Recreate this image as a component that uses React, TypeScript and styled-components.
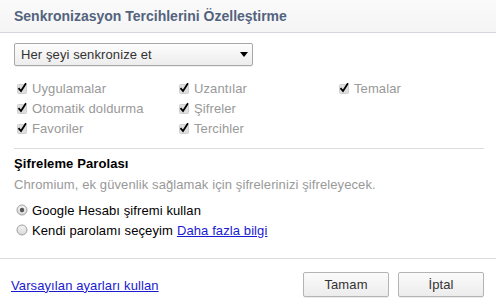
import React from "react";
import styled, { createGlobalStyle } from "styled-components";

const Global = createGlobalStyle`
  html, body { margin: 0; padding: 0; background: #fff; }
  body { font-family: "Liberation Sans", Arial, sans-serif; font-size: 13px; color: #222; letter-spacing: 0.1px; }
  * { box-sizing: border-box; }
`;

const Page = styled.div`
  width: 496px;
  height: 307px;
  display: flex;
  flex-direction: column;
  background: #fff;
  overflow: hidden;
`;

const Header = styled.div`
  height: 33px;
  flex: none;
  display: flex;
  align-items: center;
  padding: 0 14px 1px 14px;
  background: linear-gradient(#fafafa, #f5f5f5);
  border-bottom: 1px solid #d4d6e0;
`;

const Title = styled.h1`
  margin: 0;
  font-size: 14px;
  letter-spacing: 0;
  font-weight: bold;
  color: #53637d;
`;

const Content = styled.div`
  flex: 1;
  padding: 10px 12px 0 14px;
  display: flex;
  flex-direction: column;
`;

const SelectWrap = styled.div`
  position: relative;
  width: 239px;
  height: 23px;
`;

const Select = styled.select`
  appearance: none;
  -webkit-appearance: none;
  width: 100%;
  height: 100%;
  border: 1px solid #a8a8a8;
  border-radius: 2px;
  background: linear-gradient(#fdfdfd, #ededed);
  font-family: "Liberation Sans", Arial, sans-serif;
  font-size: 13px;
  letter-spacing: 0.1px;
  color: #333;
  padding: 0 20px 0 6px;
  box-shadow: 0 1px 0 rgba(0,0,0,0.06);
  outline: none;
`;

const Arrow = styled.svg`
  position: absolute;
  right: 5px;
  top: 9px;
  pointer-events: none;
`;

const Grid = styled.div`
  display: grid;
  grid-template-columns: 162px 160px 140px;
  grid-auto-rows: 20px;
  margin-top: 12px;
  padding-left: 2px;
`;

const CheckItem = styled.label<{ $col: number; $row: number }>`
  grid-column: ${(p) => p.$col};
  grid-row: ${(p) => p.$row};
  display: flex;
  align-items: center;
  gap: 4px;
  color: #999;
  font-size: 13px;
`;

const Separator = styled.div<{ $full?: boolean }>`
  height: 1px;
  background: #dcdcdc;
  margin: ${(p) => (p.$full ? "0" : "10px 0 0 0")};
`;

const SectionTitle = styled.h2`
  margin: 7px 0 0 0;
  font-size: 13px;
  font-weight: bold;
  color: #000;
  line-height: 16px;
`;

const Description = styled.p`
  margin: 5px 0 0 0;
  color: #999;
  line-height: 16px;
`;

const RadioRow = styled.label<{ $first?: boolean }>`
  display: flex;
  align-items: center;
  gap: 4px;
  height: 20px;
  margin-top: ${(p) => (p.$first ? "7px" : "0")};
  padding-left: 2px;
  color: #000;
`;

const Link = styled.a`
  color: #1a1ad0;
  text-decoration: underline;
  cursor: pointer;
`;

const Footer = styled.div`
  height: 48px;
  flex: none;
  display: flex;
  align-items: center;
  justify-content: space-between;
  padding: 2px 12px 0 11px;
`;

const FooterLink = styled(Link)`
  margin-top: 2px;
`;

const Buttons = styled.div`
  display: flex;
  gap: 9px;
`;

const Button = styled.button`
  width: 86px;
  height: 25px;
  border: 1px solid #b4b4b4;
  border-radius: 2px;
  background: linear-gradient(#fbfbfb, #ececec);
  box-shadow: 0 1px 0 rgba(0,0,0,0.08);
  font-family: "Liberation Sans", Arial, sans-serif;
  font-size: 13px;
  letter-spacing: 0.1px;
  color: #333;
  padding: 0;
`;

const CheckIcon = () => (
  <svg width="12" height="12" viewBox="0 0 12 12">
    <rect x="1.5" y="2.5" width="9" height="9" rx="1" fill="#dedede" stroke="#d0d0d0" />
    <path d="M2.5 6.2 L5 9 L10 1.2" fill="none" stroke="#000" strokeWidth="1.8" />
  </svg>
);

const RadioIcon = ({ checked }: { checked?: boolean }) => (
  <svg width="12" height="12" viewBox="0 0 12 12">
    <defs>
      <linearGradient id={checked ? "rg1" : "rg2"} x1="0" y1="0" x2="0" y2="1">
        <stop offset="0" stopColor="#f4f4f4" />
        <stop offset="1" stopColor="#d8d8d8" />
      </linearGradient>
    </defs>
    <circle cx="6" cy="6" r="5" fill={`url(#${checked ? "rg1" : "rg2"})`} stroke="#a0a0a0" />
    {checked && <circle cx="6" cy="6" r="2.2" fill="#555" />}
  </svg>
);

const items: [string, number, number][] = [
  ["Uygulamalar", 1, 1],
  ["Otomatik doldurma", 1, 2],
  ["Favoriler", 1, 3],
  ["Uzantılar", 2, 1],
  ["Şifreler", 2, 2],
  ["Tercihler", 2, 3],
  ["Temalar", 3, 1],
];

export default function App() {
  return (
    <>
      <Global />
      <Page>
        <Header>
          <Title>Senkronizasyon Tercihlerini Özelleştirme</Title>
        </Header>
        <Content>
          <SelectWrap>
            <Select defaultValue="all">
              <option value="all">Her şeyi senkronize et</option>
            </Select>
            <Arrow width="8" height="5" viewBox="0 0 8 5">
              <path d="M0 0 H8 L4 5 Z" fill="#000" />
            </Arrow>
          </SelectWrap>
          <Grid>
            {items.map(([label, col, row]) => (
              <CheckItem key={label} $col={col} $row={row}>
                <CheckIcon />
                {label}
              </CheckItem>
            ))}
          </Grid>
          <Separator />
          <SectionTitle>Şifreleme Parolası</SectionTitle>
          <Description>Chromium, ek güvenlik sağlamak için şifrelerinizi şifreleyecek.</Description>
          <RadioRow $first>
            <RadioIcon checked />
            Google Hesabı şifremi kullan
          </RadioRow>
          <RadioRow>
            <RadioIcon />
            Kendi parolamı seçeyim <Link>Daha fazla bilgi</Link>
          </RadioRow>
        </Content>
        <Separator $full />
        <Footer>
          <FooterLink>Varsayılan ayarları kullan</FooterLink>
          <Buttons>
            <Button>Tamam</Button>
            <Button>İptal</Button>
          </Buttons>
        </Footer>
      </Page>
    </>
  );
}
